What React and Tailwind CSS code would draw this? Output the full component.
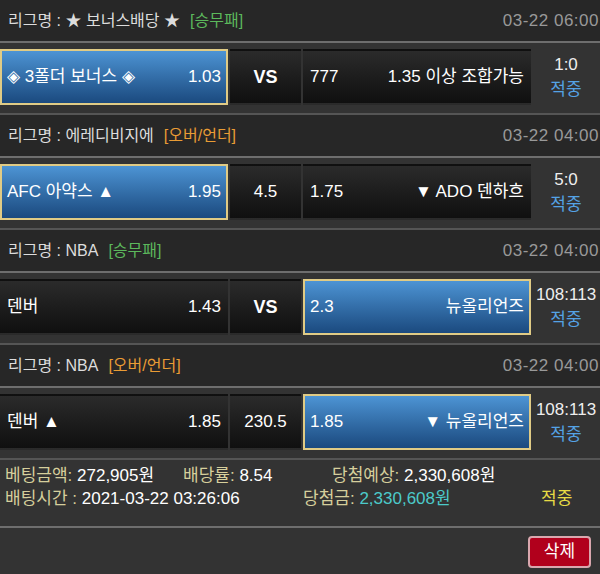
const BETS = [
  {
    league: "★ 보너스배당 ★",
    type: "승무패",
    time: "03-22 06:00",
    home: "◈ 3폴더 보너스 ◈",
    homeOdd: "1.03",
    mid: "VS",
    awayOdd: "777",
    away: "1.35 이상 조합가능",
    pick: "home",
    score: "1:0",
  },
  {
    league: "에레디비지에",
    type: "오버/언더",
    time: "03-22 04:00",
    home: "AFC 아약스 ▲",
    homeOdd: "1.95",
    mid: "4.5",
    awayOdd: "1.75",
    away: "▼ ADO 덴하흐",
    pick: "home",
    score: "5:0",
  },
  {
    league: "NBA",
    type: "승무패",
    time: "03-22 04:00",
    home: "덴버",
    homeOdd: "1.43",
    mid: "VS",
    awayOdd: "2.3",
    away: "뉴올리언즈",
    pick: "away",
    score: "108:113",
  },
  {
    league: "NBA",
    type: "오버/언더",
    time: "03-22 04:00",
    home: "덴버 ▲",
    homeOdd: "1.85",
    mid: "230.5",
    awayOdd: "1.85",
    away: "▼ 뉴올리언즈",
    pick: "away",
    score: "108:113",
  },
];

const cellBase = "h-[56px] flex items-center justify-between px-[5px] border-2 whitespace-nowrap";
const picked = "bg-gradient-to-b from-[#4d94d4] to-[#1b4a7f] border-[#e0cb85]";
const plain = "bg-gradient-to-b from-[#2b2b2b] to-[#101010] border-transparent";

function BetBlock({ b }) {
  const typeColor = b.type === "승무패" ? "text-[#5cb85c]" : "text-[#e99c35]";
  return (
    <div className="border-b-2 border-[#555555]">
      <div className="w-[591px] h-[41px] bg-[#272727] border-b-2 border-[#6e6e6e] box-content flex items-center justify-between pl-[8px] pr-[5px]">
        <span className="text-[#dddddd] text-[16px]">
          리그명 : {b.league}
          <span className={`ml-[10px] ${typeColor}`}>[{b.type}]</span>
        </span>
        <span className="text-[#999999] tracking-[0.5px]">{b.time}</span>
      </div>
      <div className="flex gap-[2px] pt-[6px] pb-[8px]">
        <div className={`w-[228px] ${cellBase} ${b.pick === "home" ? picked : plain}`}>
          <span>{b.home}</span>
          <span>{b.homeOdd}</span>
        </div>
        <div className={`w-[71px] ${cellBase} ${plain} justify-center`}>
          <span className={b.mid === "VS" ? "font-bold text-[18px]" : ""}>{b.mid}</span>
        </div>
        <div className={`w-[228px] ${cellBase} ${b.pick === "away" ? picked : plain}`}>
          <span>{b.awayOdd}</span>
          <span>{b.away}</span>
        </div>
        <div className="w-[66px] flex flex-col items-center justify-center leading-[25px] whitespace-nowrap">
          <span className="text-[#eeeeee]">{b.score}</span>
          <span className="text-[#55a3e6]">적중</span>
        </div>
      </div>
    </div>
  );
}

export default function App() {
  return (
    <div
      className="w-[600px] h-[574px] bg-[#333333] text-white text-[17px] overflow-hidden"
      style={{ fontFamily: '"Liberation Sans", "Noto Sans CJK KR", sans-serif' }}
    >
      {BETS.map((b, i) => (
        <BetBlock key={i} b={b} />
      ))}
      <div className="pt-[4px] pb-[16px] pl-[5px] leading-[23px] border-b-2 border-[#6e6e6e] whitespace-nowrap">
        <div className="flex">
          <div className="w-[178px]">
            <span className="text-[#d6cf9c]">베팅금액:</span> 272,905원
          </div>
          <div className="w-[149px]">
            <span className="text-[#d6cf9c]">배당률:</span> 8.54
          </div>
          <div>
            <span className="text-[#d6cf9c]">당첨예상:</span> 2,330,608원
          </div>
        </div>
        <div className="flex">
          <div className="w-[298px]">
            <span className="text-[#d6cf9c]">배팅시간 :</span> 2021-03-22 03:26:06
          </div>
          <div className="w-[238px]">
            <span className="text-[#d6cf9c]">당첨금:</span>{" "}
            <span className="text-[#4ccaca]">2,330,608원</span>
          </div>
          <div className="text-[#e8dc45]">적중</div>
        </div>
      </div>
      <div className="w-[591px] flex justify-end pt-[8px]">
        <button className="w-[63px] h-[32px] bg-[#b1001c] border-2 border-[#d9a7ae] rounded-[4px] text-white">
          삭제
        </button>
      </div>
    </div>
  );
}
